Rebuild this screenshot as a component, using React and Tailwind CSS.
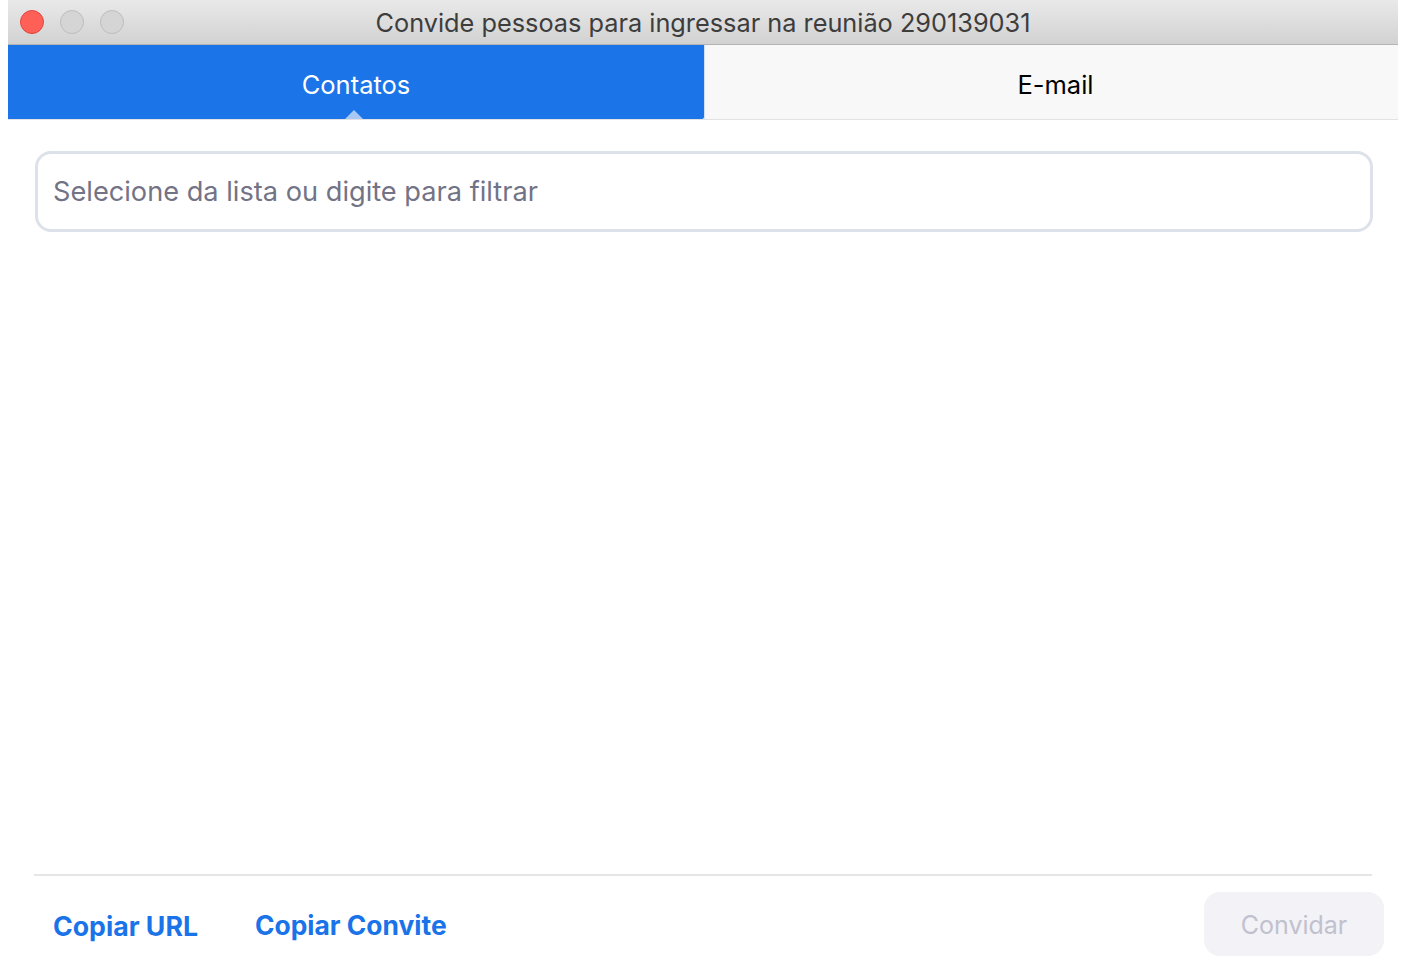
export default function App() {
  return (
    <div className="w-full h-[976px] bg-white" style={{ fontFamily: 'Inter, "Noto Sans", sans-serif' }}>
      <div className="ml-[8px] w-[1390px] h-full flex flex-col bg-white">
        {/* Title bar */}
        <div className="relative h-[45px] flex items-center justify-center bg-gradient-to-b from-[#e9e9e9] to-[#d2d2d2] border-b border-[#b3b3b3] shrink-0">
          <div className="absolute left-[12px] top-[10px] flex gap-[16px]">
            <span className="w-[24px] h-[24px] rounded-full bg-[#fe5f57] border border-[#e2463f]" />
            <span className="w-[24px] h-[24px] rounded-full bg-[#d5d5d5] border border-[#bdbdbd]" />
            <span className="w-[24px] h-[24px] rounded-full bg-[#d5d5d5] border border-[#bdbdbd]" />
          </div>
          <p className="pt-[2px] text-[25.3px] text-[#3d3d3d]">Convide pessoas para ingressar na reunião 290139031</p>
        </div>

        {/* Tabs */}
        <div className="flex h-[75px] shrink-0 border-b border-[#e2e2e2]">
          <button className="relative w-[696px] pt-[6px] bg-[#1b74e8] text-white text-[25.5px] flex items-center justify-center rounded-br-[2px]">
            Contatos
            <span className="absolute bottom-0 left-[337px] w-0 h-0 border-l-[9px] border-r-[9px] border-b-[9px] border-l-transparent border-r-transparent border-b-[#a9c8f5]" />
          </button>
          <button className="flex-1 pt-[6px] pl-[8px] bg-[#f8f8f8] text-black text-[25.5px] flex items-center justify-center border-l border-[#cfe0f8]">
            E-mail
          </button>
        </div>

        {/* Filter input */}
        <div className="px-[27px] pt-[31px]">
          <input
            type="text"
            placeholder="Selecione da lista ou digite para filtrar"
            className="w-[1338px] h-[81px] rounded-[16px] border-[3px] border-[#dde1e9] px-[15px] text-[27.2px] text-[#333] placeholder:text-[#737386] outline-none"
          />
        </div>

        <div className="flex-1" />

        {/* Footer */}
        <div className="mx-[26px] border-t-2 border-[#e6e6e6]" />
        <div className="flex items-center pl-[45px] pr-[14px] pt-[16px] pb-[20px]">
          <button className="pt-[4px] text-[26.7px] font-bold text-[#1a73e8]">Copiar URL</button>
          <button className="pt-[4px] ml-[57px] text-[26.4px] font-bold text-[#1a73e8]">Copiar Convite</button>
          <div className="flex-1" />
          <button className="w-[180px] h-[64px] pt-[3px] rounded-[16px] bg-[#f2f2f7] text-[25px] text-[#c1c1cd]">Convidar</button>
        </div>
      </div>
    </div>
  );
}
